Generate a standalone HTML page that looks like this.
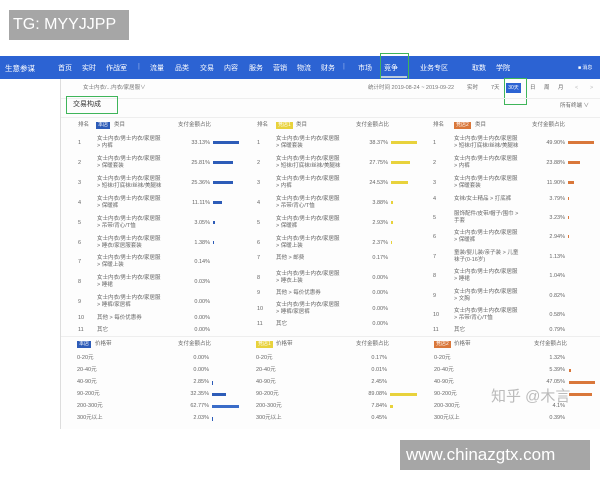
<!DOCTYPE html>
<html><head><meta charset="utf-8"><style>
*{margin:0;padding:0;box-sizing:border-box}
body{width:600px;height:480px;background:#fff;position:relative;overflow:hidden;font-family:"Liberation Sans","Noto Sans CJK SC",sans-serif;color:#555}
div,span{position:absolute;white-space:nowrap}
.t{font-size:5.5px;line-height:7px;color:#666}
.r{text-align:right;width:40px}
.b{height:3px}
.bl{background:#2d5cb8}.ye{background:#e8d23c}.or{background:#d9773a}
.nav span{color:#fff;font-size:7px;top:7px}
.bd{font-size:5px;color:#fff;height:7px;line-height:7px;text-align:center;padding:0 2px}
.bt{font-size:5.5px;line-height:12px;color:#666}
</style></head><body>
<div style="left:9px;top:10px;width:120px;height:30px;background:#a6a6a6;color:#fff;font-size:16px;line-height:30px;padding-left:4px">TG: MYYJJPP</div>

<div class="nav" style="left:0;top:56px;width:600px;height:23px;background:#2c63d3">
<span style="left:5px;font-size:7.5px">生意参谋</span>
<span style="left:58px">首页</span><span style="left:82px">实时</span><span style="left:106px">作战室</span>
<span style="left:138px;opacity:.5">|</span>
<span style="left:150px">流量</span><span style="left:175px">品类</span><span style="left:200px">交易</span><span style="left:224px">内容</span><span style="left:249px">服务</span><span style="left:273px">营销</span><span style="left:297px">物流</span><span style="left:321px">财务</span>
<span style="left:343px;opacity:.5">|</span>
<span style="left:358px">市场</span><span style="left:384px">竞争</span>
<span style="left:420px">业务专区</span><span style="left:472px">取数</span><span style="left:496px">学院</span>
<span style="left:578px;font-size:5px;top:8px">■ 消息</span>
<div style="left:381px;top:20px;width:26px;height:2px;background:#bcd"></div>
</div>
<div style="left:380px;top:53px;width:29px;height:31px;border:1px solid #3fb55a"></div>

<div style="left:60px;top:79px;width:1px;height:350px;background:#ddd"></div>
<div style="left:61px;top:79px;width:539px;height:350px;background:#fdfdfd"></div>
<div class="t" style="left:83px;top:85px;color:#777">女士内衣/...内衣/家居服∨</div>
<div class="t" style="left:368px;top:85px;color:#777">统计时间 2019-08-24 ~ 2019-09-22</div>
<div class="t" style="left:467px;top:85px">实时</div><div class="t" style="left:491px;top:85px">7天</div>
<div class="bd" style="left:506px;top:83px;width:15px;height:10px;line-height:10px;background:#2c63d3">30天</div>
<div class="t" style="left:530px;top:85px">日</div><div class="t" style="left:544px;top:85px">周</div><div class="t" style="left:558px;top:85px">月</div>
<div class="t" style="left:575px;top:85px;color:#bbb">&lt;</div><div class="t" style="left:590px;top:85px;color:#bbb">&gt;</div>
<div style="left:504px;top:78px;width:23px;height:27px;border:1px solid #3fb55a"></div>
<div style="left:61px;top:98px;width:539px;height:1px;background:#eee"></div>
<div style="left:66px;top:96px;width:52px;height:18px;border:1px solid #3fb55a;font-size:7px;color:#333;line-height:16px;padding-left:6px">交易构成</div>
<div class="t" style="left:560px;top:103px">所有终端 ∨</div>
<div style="left:61px;top:117px;width:539px;height:1px;background:#eee"></div>

<!-- headers -->
<div class="t" style="left:78px;top:122px">排名</div><div class="bd bl" style="left:96px;top:122px">本店</div><div class="t" style="left:114px;top:122px">类目</div><div class="t" style="left:178px;top:122px">支付金额占比</div>
<div class="t" style="left:257px;top:122px">排名</div><div class="bd ye" style="left:276px;top:122px">竞店1</div><div class="t" style="left:296px;top:122px">类目</div><div class="t" style="left:356px;top:122px">支付金额占比</div>
<div class="t" style="left:433px;top:122px">排名</div><div class="bd or" style="left:454px;top:122px">竞店2</div><div class="t" style="left:475px;top:122px">类目</div><div class="t" style="left:532px;top:122px">支付金额占比</div>

<!-- col1 -->
<div class="t" style="left:78px;top:140px">1</div><div class="t" style="left:97px;top:136px">女士内衣/男士内衣/家居服<br>&gt; 内裤</div><div class="t r" style="left:170px;top:140px">33.13%</div><div class="b bl" style="left:213px;top:141px;width:26px"></div>
<div class="t" style="left:78px;top:160px">2</div><div class="t" style="left:97px;top:156px">女士内衣/男士内衣/家居服<br>&gt; 保暖套装</div><div class="t r" style="left:170px;top:160px">25.81%</div><div class="b bl" style="left:213px;top:161px;width:20px"></div>
<div class="t" style="left:78px;top:180px">3</div><div class="t" style="left:97px;top:176px">女士内衣/男士内衣/家居服<br>&gt; 短袜/打底袜/丝袜/美腿袜</div><div class="t r" style="left:170px;top:180px">25.36%</div><div class="b bl" style="left:213px;top:181px;width:20px"></div>
<div class="t" style="left:78px;top:200px">4</div><div class="t" style="left:97px;top:196px">女士内衣/男士内衣/家居服<br>&gt; 保暖裤</div><div class="t r" style="left:170px;top:200px">11.11%</div><div class="b bl" style="left:213px;top:201px;width:9px"></div>
<div class="t" style="left:78px;top:220px">5</div><div class="t" style="left:97px;top:216px">女士内衣/男士内衣/家居服<br>&gt; 吊带/背心/T恤</div><div class="t r" style="left:170px;top:220px">3.05%</div><div class="b bl" style="left:213px;top:221px;width:2px"></div>
<div class="t" style="left:78px;top:240px">6</div><div class="t" style="left:97px;top:236px">女士内衣/男士内衣/家居服<br>&gt; 睡衣/家居服套装</div><div class="t r" style="left:170px;top:240px">1.38%</div><div class="b bl" style="left:213px;top:241px;width:1px"></div>
<div class="t" style="left:78px;top:259px">7</div><div class="t" style="left:97px;top:255px">女士内衣/男士内衣/家居服<br>&gt; 保暖上装</div><div class="t r" style="left:170px;top:259px">0.14%</div>
<div class="t" style="left:78px;top:279px">8</div><div class="t" style="left:97px;top:275px">女士内衣/男士内衣/家居服<br>&gt; 睡裙</div><div class="t r" style="left:170px;top:279px">0.03%</div>
<div class="t" style="left:78px;top:299px">9</div><div class="t" style="left:97px;top:295px">女士内衣/男士内衣/家居服<br>&gt; 睡裤/家居裤</div><div class="t r" style="left:170px;top:299px">0.00%</div>
<div class="t" style="left:78px;top:315px">10</div><div class="t" style="left:97px;top:315px">其他 &gt; 每价优惠券</div><div class="t r" style="left:170px;top:315px">0.00%</div>
<div class="t" style="left:78px;top:327px">11</div><div class="t" style="left:97px;top:327px">其它</div><div class="t r" style="left:170px;top:327px">0.00%</div>

<!-- col2 -->
<div class="t" style="left:257px;top:140px">1</div><div class="t" style="left:276px;top:136px">女士内衣/男士内衣/家居服<br>&gt; 保暖套装</div><div class="t r" style="left:348px;top:140px">38.37%</div><div class="b ye" style="left:391px;top:141px;width:26px"></div>
<div class="t" style="left:257px;top:160px">2</div><div class="t" style="left:276px;top:156px">女士内衣/男士内衣/家居服<br>&gt; 短袜/打底袜/丝袜/美腿袜</div><div class="t r" style="left:348px;top:160px">27.75%</div><div class="b ye" style="left:391px;top:161px;width:19px"></div>
<div class="t" style="left:257px;top:180px">3</div><div class="t" style="left:276px;top:176px">女士内衣/男士内衣/家居服<br>&gt; 内裤</div><div class="t r" style="left:348px;top:180px">24.53%</div><div class="b ye" style="left:391px;top:181px;width:17px"></div>
<div class="t" style="left:257px;top:200px">4</div><div class="t" style="left:276px;top:196px">女士内衣/男士内衣/家居服<br>&gt; 吊带/背心/T恤</div><div class="t r" style="left:348px;top:200px">3.88%</div><div class="b ye" style="left:391px;top:201px;width:2px"></div>
<div class="t" style="left:257px;top:220px">5</div><div class="t" style="left:276px;top:216px">女士内衣/男士内衣/家居服<br>&gt; 保暖裤</div><div class="t r" style="left:348px;top:220px">2.93%</div><div class="b ye" style="left:391px;top:221px;width:2px"></div>
<div class="t" style="left:257px;top:240px">6</div><div class="t" style="left:276px;top:236px">女士内衣/男士内衣/家居服<br>&gt; 保暖上装</div><div class="t r" style="left:348px;top:240px">2.37%</div><div class="b ye" style="left:391px;top:241px;width:1px"></div>
<div class="t" style="left:257px;top:255px">7</div><div class="t" style="left:276px;top:255px">其他 &gt; 邮费</div><div class="t r" style="left:348px;top:255px">0.17%</div>
<div class="t" style="left:257px;top:275px">8</div><div class="t" style="left:276px;top:271px">女士内衣/男士内衣/家居服<br>&gt; 睡衣上装</div><div class="t r" style="left:348px;top:275px">0.00%</div>
<div class="t" style="left:257px;top:290px">9</div><div class="t" style="left:276px;top:290px">其他 &gt; 每价优惠券</div><div class="t r" style="left:348px;top:290px">0.00%</div>
<div class="t" style="left:257px;top:306px">10</div><div class="t" style="left:276px;top:302px">女士内衣/男士内衣/家居服<br>&gt; 睡裤/家居裤</div><div class="t r" style="left:348px;top:306px">0.00%</div>
<div class="t" style="left:257px;top:321px">11</div><div class="t" style="left:276px;top:321px">其它</div><div class="t r" style="left:348px;top:321px">0.00%</div>

<!-- col3 -->
<div class="t" style="left:433px;top:140px">1</div><div class="t" style="left:454px;top:136px">女士内衣/男士内衣/家居服<br>&gt; 短袜/打底袜/丝袜/美腿袜</div><div class="t r" style="left:525px;top:140px">49.90%</div><div class="b or" style="left:568px;top:141px;width:26px"></div>
<div class="t" style="left:433px;top:160px">2</div><div class="t" style="left:454px;top:156px">女士内衣/男士内衣/家居服<br>&gt; 内裤</div><div class="t r" style="left:525px;top:160px">23.88%</div><div class="b or" style="left:568px;top:161px;width:12px"></div>
<div class="t" style="left:433px;top:180px">3</div><div class="t" style="left:454px;top:176px">女士内衣/男士内衣/家居服<br>&gt; 保暖套装</div><div class="t r" style="left:525px;top:180px">11.90%</div><div class="b or" style="left:568px;top:181px;width:6px"></div>
<div class="t" style="left:433px;top:196px">4</div><div class="t" style="left:454px;top:196px">女袜/女士精品 &gt; 打底裤</div><div class="t r" style="left:525px;top:196px">3.79%</div><div class="b or" style="left:568px;top:197px;width:1px"></div>
<div class="t" style="left:433px;top:215px">5</div><div class="t" style="left:454px;top:211px">服饰配件/皮带/帽子/围巾 &gt;<br>手套</div><div class="t r" style="left:525px;top:215px">3.23%</div><div class="b or" style="left:568px;top:216px;width:1px"></div>
<div class="t" style="left:433px;top:234px">6</div><div class="t" style="left:454px;top:230px">女士内衣/男士内衣/家居服<br>&gt; 保暖裤</div><div class="t r" style="left:525px;top:234px">2.94%</div><div class="b or" style="left:568px;top:235px;width:1px"></div>
<div class="t" style="left:433px;top:254px">7</div><div class="t" style="left:454px;top:250px">童装/婴儿装/亲子装 &gt; 儿童<br>袜子(0-16岁)</div><div class="t r" style="left:525px;top:254px">1.13%</div>
<div class="t" style="left:433px;top:273px">8</div><div class="t" style="left:454px;top:269px">女士内衣/男士内衣/家居服<br>&gt; 睡裙</div><div class="t r" style="left:525px;top:273px">1.04%</div>
<div class="t" style="left:433px;top:293px">9</div><div class="t" style="left:454px;top:289px">女士内衣/男士内衣/家居服<br>&gt; 文胸</div><div class="t r" style="left:525px;top:293px">0.82%</div>
<div class="t" style="left:433px;top:312px">10</div><div class="t" style="left:454px;top:308px">女士内衣/男士内衣/家居服<br>&gt; 吊带/背心/T恤</div><div class="t r" style="left:525px;top:312px">0.58%</div>
<div class="t" style="left:433px;top:327px">11</div><div class="t" style="left:454px;top:327px">其它</div><div class="t r" style="left:525px;top:327px">0.79%</div>

<div style="left:61px;top:336px;width:539px;height:1px;background:#eee"></div>
<!-- bottom -->
<div class="bd bl" style="left:77px;top:341px">本店</div><div class="t" style="left:95px;top:341px">价格带</div><div class="t" style="left:178px;top:341px">支付金额占比</div>
<div class="bd ye" style="left:256px;top:341px">竞店1</div><div class="t" style="left:276px;top:341px">价格带</div><div class="t" style="left:356px;top:341px">支付金额占比</div>
<div class="bd or" style="left:434px;top:341px">竞店2</div><div class="t" style="left:454px;top:341px">价格带</div><div class="t" style="left:534px;top:341px">支付金额占比</div>

<div class="bt" style="left:77px;top:352px">0-20元<br>20-40元<br>40-90元<br>90-200元<br>200-300元<br>300元以上</div>
<div class="bt" style="left:256px;top:352px">0-20元<br>20-40元<br>40-90元<br>90-200元<br>200-300元<br>300元以上</div>
<div class="bt" style="left:434px;top:352px">0-20元<br>20-40元<br>40-90元<br>90-200元<br>200-300元<br>300元以上</div>
<div class="bt r" style="left:169px;top:352px">0.00%<br>0.00%<br>2.85%<br>32.35%<br>62.77%<br>2.03%</div>
<div class="bt r" style="left:347px;top:352px">0.17%<br>0.01%<br>2.45%<br>89.08%<br>7.84%<br>0.45%</div>
<div class="bt r" style="left:525px;top:352px">1.32%<br>5.39%<br>47.05%<br>&nbsp;<br>4.1%<br>0.39%</div>
<div class="b bl" style="left:212px;top:381px;width:1px;height:4px"></div>
<div class="b bl" style="left:212px;top:393px;width:14px"></div>
<div class="b bl" style="left:212px;top:405px;width:27px;background:#3a6cc8"></div>
<div class="b bl" style="left:212px;top:417px;width:1px;height:4px"></div>
<div class="b ye" style="left:390px;top:393px;width:27px"></div>
<div class="b ye" style="left:390px;top:405px;width:3px"></div>
<div class="b or" style="left:569px;top:369px;width:2px"></div>
<div class="b or" style="left:569px;top:381px;width:26px"></div>
<div class="b or" style="left:569px;top:393px;width:23px"></div>
<div style="left:491px;top:385px;font-size:15px;color:#bbb">知乎 @木言</div>

<div style="left:400px;top:440px;width:190px;height:30px;background:#a6a6a6;color:#fff;font-size:17px;line-height:30px;padding-left:6px">www.chinazgtx.com</div>
</body></html>
